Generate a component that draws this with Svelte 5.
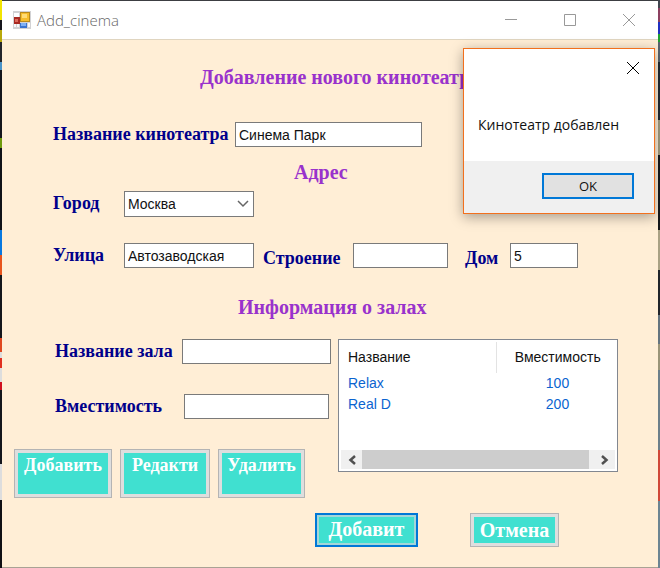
<script>
  let cinema = $state('Синема Парк');
  let city = $state('Москва');
  let street = $state('Автозаводская');
  let building = $state('');
  let house = $state('5');
  let hall = $state('');
  let capacity = $state('');
  const halls = [
    { name: 'Relax', seats: 100 },
    { name: 'Real D', seats: 200 }
  ];
</script>

<div class="desktop">
  <main class="window">
    <header class="titlebar">
      <svg class="app-icon" width="18" height="18" viewBox="0 0 18 18" aria-hidden="true">
        <rect width="18" height="18" fill="#d2d2d4" />
        <rect x="1" y="2" width="5" height="4" fill="#fff" />
        <rect x="1" y="13" width="2" height="3" fill="#f8f8fa" />
        <rect x="4" y="13" width="2" height="3" fill="#f8f8fa" />
        <rect x="15" y="12" width="2" height="4" fill="#f8f8fa" />
        <rect x="1" y="6" width="6" height="7" fill="#a92a22" />
        <rect x="2" y="8" width="3" height="3" fill="#dd6a5c" />
        <rect x="7" y="1" width="10" height="10" fill="#b98a1c" />
        <rect x="8" y="2" width="8" height="8" fill="#f6bd2c" />
        <rect x="9" y="3" width="5" height="4" fill="#ffdc74" />
        <rect x="7" y="12" width="7" height="5" fill="#3b74d0" />
        <rect x="8" y="12" width="5" height="3" fill="#7fb0f4" />
      </svg>
      <h1>Add_cinema</h1>
      <div class="controls">
        <button aria-label="Свернуть">
          <svg width="12" height="12" viewBox="0 0 12 12"><path d="M0 5.5H12" /></svg>
        </button>
        <button aria-label="Развернуть">
          <svg width="12" height="12" viewBox="0 0 12 12"><path d="M.5.5h11v11H.5z" /></svg>
        </button>
        <button aria-label="Закрыть">
          <svg width="12" height="12" viewBox="0 0 12 12"><path d="M0 0L12 12M12 0L0 12" /></svg>
        </button>
      </div>
    </header>

    <form onsubmit={(e) => e.preventDefault()}>
      <h2 class="main-title">Добавление нового кинотеатра</h2>

      <div class="row cinema">
        <label for="cinema">Название кинотеатра</label>
        <input id="cinema" bind:value={cinema} />
      </div>

      <h2 class="address-title">Адрес</h2>

      <div class="row">
        <label class="short" for="city">Город</label>
        <div class="combo">
          <select id="city" bind:value={city}>
            <option>Москва</option>
          </select>
          <svg width="12" height="8" viewBox="0 0 12 8" aria-hidden="true"><path d="M1 1l5 5 5-5" /></svg>
        </div>
      </div>

      <div class="row street">
        <label class="short" for="street">Улица</label>
        <input id="street" bind:value={street} />
        <label class="building" for="building">Строение</label>
        <input id="building" bind:value={building} />
        <label class="house" for="house">Дом</label>
        <input id="house" bind:value={house} />
      </div>

      <h2 class="halls-title">Информация о залах</h2>

      <section class="halls">
        <div class="hall-form">
          <div class="row hall">
            <label for="hall">Название зала</label>
            <input id="hall" bind:value={hall} />
          </div>
          <div class="row capacity">
            <label for="capacity">Вместимость</label>
            <input id="capacity" bind:value={capacity} />
          </div>
          <div class="hall-actions">
            <button class="action add" type="button">Добавить</button>
            <button class="action edit" type="button">Редакти</button>
            <button class="action remove" type="button">Удалить</button>
          </div>
        </div>

        <div class="list">
          <table>
            <thead>
              <tr><th>Название</th><th>Вместимость</th></tr>
            </thead>
            <tbody>
              {#each halls as item}
                <tr><td>{item.name}</td><td>{item.seats}</td></tr>
              {/each}
            </tbody>
          </table>
          <div class="scrollbar">
            <button type="button" aria-label="Влево">
              <svg width="8" height="10" viewBox="0 0 8 10"><path d="M7 1L2.500 5L7 9" /></svg>
            </button>
            <div class="thumb"></div>
            <button type="button" aria-label="Вправо">
              <svg width="8" height="10" viewBox="0 0 8 10"><path d="M1 1L5.500 5L1 9" /></svg>
            </button>
          </div>
        </div>
      </section>

      <footer>
        <button class="action submit">Добавит</button>
        <button class="action cancel" type="button">Отмена</button>
      </footer>
    </form>
  </main>

  <div class="message" role="alertdialog" aria-labelledby="message-text">
    <div class="message-body">
      <button class="close" aria-label="Закрыть сообщение">
        <svg width="12" height="12" viewBox="0 0 12 12"><path d="M0 0L12 12M12 0L0 12" /></svg>
      </button>
      <p id="message-text">Кинотеатр добавлен</p>
    </div>
    <div class="message-footer">
      <button class="ok">OK</button>
    </div>
  </div>
</div>

<style>
  :global(body) {
    margin: 0;
  }
  * {
    box-sizing: border-box;
  }
  .desktop {
    position: relative;
    min-height: 100vh;
    display: flex;
    padding: 1px 2px 0;
    background:
      linear-gradient(#f2e400 0 20px, #16171c 20px 30px, #b8a80a 30px 42px, #23252b 42px 62px, #4b93c8 62px 70px, #14161c 70px 138px, #6f9a0c 138px 148px, #101218 148px 230px, #0878e0 230px 255px, #e8541c 255px 275px, #14161c 275px 338px, #e04820 338px 352px, #ddd 352px 358px, #e03020 358px 368px, #ddd 368px 382px, #d01020 382px 390px, #14161c 390px 464px, #ddd 464px 500px, #101014 500px) left / 2px 100% no-repeat,
      linear-gradient(#40454e 0 8px, #8c4060 8px 22px, #2030c0 22px 34px, #20a030 34px 42px, #59636e 42px 62px, #202830 62px 120px, #a39c80 120px 155px, #15181c 155px 230px, #a9a184 230px 270px, #20242a 270px 315px, #64747f 315px 344px, #9a9478 344px 370px, #6c7f8a 370px 450px, #d04838 450px 501px, #6c8492 501px) right / 2px 100% no-repeat,
      #3c3e42;
  }
  .window {
    flex: 1;
    display: flex;
    flex-direction: column;
    background: #ffeed6;
    border-bottom: 1px solid #a9a294;
    font-family: 'Liberation Sans', Arial, sans-serif;
  }
  button {
    padding: 0;
    border: 0;
    background: none;
    font-family: inherit;
  }
  svg {
    display: block;
    fill: none;
  }
  .titlebar {
    display: flex;
    align-items: center;
    height: 39px;
    padding-left: 11px;
    background: #fff;
    border-bottom: 1px solid #e0d5c0;
  }
  .titlebar h1 {
    margin: 0 0 0 6px;
    font: 15px/20px 'Open Sans', 'Noto Sans', sans-serif;
    font-weight: 300;
    color: #666;
  }
  .controls {
    display: flex;
    margin-left: auto;
  }
  .controls button {
    display: flex;
    justify-content: center;
    width: 59px;
  }
  .controls svg {
    stroke: #999;
  }
  form {
    padding: 0 12px;
  }
  h2,
  label {
    font-family: 'Liberation Serif', 'Times New Roman', serif;
    font-weight: bold;
  }
  h2 {
    margin: 0;
    font-size: 20px;
    line-height: 24px;
    color: #9932cc;
  }
  .main-title {
    margin: 25px 0 33px 186px;
  }
  .address-title {
    margin: 13px 0 7px 280px;
  }
  .halls-title {
    margin: 25px 0 20px 224px;
  }
  label {
    flex: none;
    font-size: 18px;
    line-height: 24px;
    color: #00008b;
  }
  .row {
    display: flex;
    padding-left: 39px;
  }
  input,
  select {
    height: 25px;
    min-width: 0;
    padding: 0 3px;
    border: 1px solid #7a7a7a;
    border-radius: 0;
    background: #fff;
    color: #111;
    font: 14px/20px 'Liberation Sans', Arial, sans-serif;
    outline: 0;
  }
  .cinema label {
    width: 182px;
  }
  #cinema {
    width: 187px;
  }
  .short {
    width: 71px;
  }
  .combo {
    display: grid;
    align-items: center;
    width: 130px;
  }
  .combo > * {
    grid-area: 1 / 1;
  }
  .combo select {
    width: 100%;
    height: 26px;
    appearance: none;
  }
  .combo svg {
    justify-self: end;
    margin-right: 5px;
    stroke: #666;
    stroke-width: 1.5;
    pointer-events: none;
  }
  .street {
    margin-top: 26px;
  }
  #street {
    width: 130px;
  }
  .building {
    width: 99px;
    padding: 3px 0 0 9px;
  }
  #building {
    width: 95px;
  }
  .house {
    width: 62px;
    padding: 3px 0 0 17px;
  }
  #house {
    width: 68px;
  }
  .halls {
    display: flex;
    align-items: flex-start;
    gap: 7px;
  }
  .hall-form {
    width: 317px;
  }
  .hall,
  .capacity {
    padding-left: 41px;
  }
  .hall label {
    width: 127px;
  }
  .capacity label {
    width: 129px;
  }
  #hall {
    width: 149px;
  }
  #capacity {
    width: 145px;
  }
  .capacity {
    margin-top: 30px;
  }
  .hall-actions {
    display: flex;
    gap: 8px;
    margin-top: 30px;
  }
  .action {
    border: 1px solid #b4b4b4;
    background: #40e0d0;
    box-shadow: inset 0 0 0 3px #dedede;
    color: #fff;
    font: bold 18px/24px 'Liberation Serif', 'Times New Roman', serif;
  }
  .hall-actions .action {
    height: 49px;
    padding-bottom: 18px;
  }
  .add {
    width: 98px;
  }
  .edit {
    width: 90px;
  }
  .remove {
    width: 87px;
  }
  .list {
    width: 280px;
    height: 133px;
    display: flex;
    flex-direction: column;
    justify-content: space-between;
    padding: 2px;
    border: 1px solid #828790;
    background: #fff;
  }
  table {
    width: 100%;
    border-collapse: collapse;
    font-size: 14px;
    line-height: 21px;
  }
  th {
    height: 31px;
    padding: 0;
    font-weight: normal;
    color: #111;
  }
  th:first-child,
  td:first-child {
    width: 155px;
    padding: 0 0 0 7px;
    text-align: left;
  }
  th:first-child {
    border-right: 1px solid #e3e3e3;
  }
  th:last-child,
  td:last-child {
    padding-left: 4px;
  }
  td {
    padding: 0;
    text-align: center;
    color: #0a64d0;
  }
  .scrollbar {
    display: flex;
    height: 19px;
    background: #f0f0f0;
  }
  .scrollbar button {
    display: grid;
    place-items: center;
    width: 21px;
  }
  .scrollbar button:last-child {
    width: 26px;
    padding-left: 6px;
  }
  .scrollbar svg {
    stroke: #505050;
    stroke-width: 2.500;
  }
  .thumb {
    flex: 1;
    background: #cdcdcd;
  }
  footer {
    display: flex;
    gap: 52px;
    margin: 15px 0 0 301px;
  }
  footer .action {
    height: 34px;
    font-size: 20px;
  }
  .submit {
    width: 103px;
    padding-bottom: 2px;
    border: 2px solid #0078d7;
    box-shadow: inset 0 0 0 2px #a5d6d9;
  }
  .cancel {
    width: 89px;
  }
  .message {
    position: absolute;
    top: 48px;
    right: 5px;
    width: 192px;
    border: 1px solid #f2701d;
    background: #fff;
    box-shadow: 0 3px 12px rgba(0, 0, 0, 0.35);
    font: 14px/20px 'Open Sans', 'Noto Sans', sans-serif;
    color: #111;
  }
  .message-body {
    display: flex;
    flex-direction: column;
    height: 112px;
    padding: 13px 15px 0 14px;
  }
  .close {
    align-self: flex-end;
  }
  .close svg {
    stroke: #000;
  }
  .message p {
    margin: 41px 0 0;
    white-space: nowrap;
  }
  .message-footer {
    display: flex;
    justify-content: flex-end;
    padding: 12px 20px 14px;
    background: #f0f0f0;
  }
  .ok {
    width: 92px;
    height: 26px;
    border: 2px solid #0078d7;
    background: #e1e1e1;
    font-size: 13px;
    color: #111;
  }
</style>
